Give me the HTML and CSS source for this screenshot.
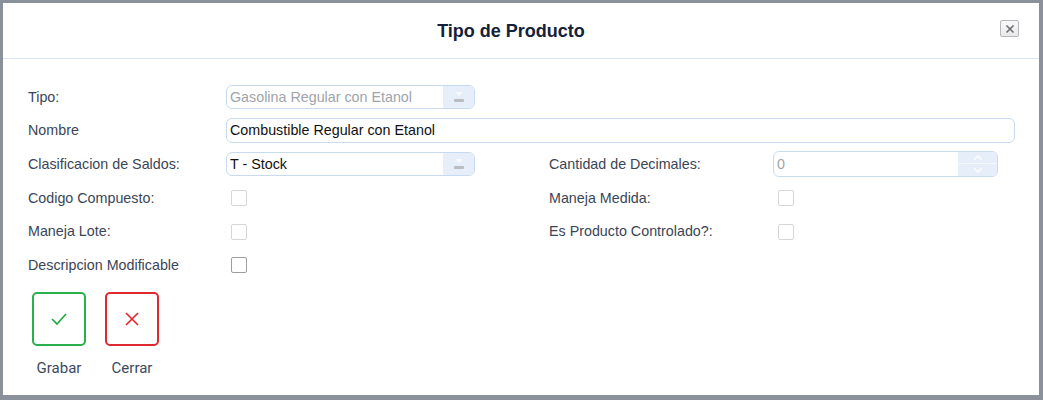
FILE: index.html
```html
<!DOCTYPE html>
<html lang="es">
<head>
<meta charset="utf-8">
<title>Tipo de Producto</title>
<link rel="stylesheet" href="styles.css">
</head>
<body>
<div class="dialog">
  <div class="header">
    <h1 class="title">Tipo de Producto</h1>
    <button class="close" type="button" aria-label="Cerrar">
      <svg width="10" height="10" viewBox="0 0 10 10"><path d="M1.5 1.5 L8.5 8.5 M8.5 1.5 L1.5 8.5" stroke="#6d6d6d" stroke-width="1.6" fill="none"/></svg>
    </button>
  </div>
  <div class="content">
    <div class="form">
      <div class="lbl">Tipo:</div>
      <div class="ctl">
        <div class="select disabled">
          <span class="val">Gasolina Regular con Etanol</span>
          <span class="arrow"><svg width="14" height="14" viewBox="0 0 14 14"><path d="M3 2 L11 2 L7 6 Z" fill="#f7f9fc"/><rect x="2" y="9" width="10" height="3" rx="1" fill="#b9bcc0"/></svg></span>
        </div>
      </div>
      <div></div><div></div>

      <div class="lbl">Nombre</div>
      <div class="ctl span3">
        <div class="input"><span class="val">Combustible Regular con Etanol</span></div>
      </div>

      <div class="lbl">Clasificacion de Saldos:</div>
      <div class="ctl">
        <div class="select">
          <span class="val">T - Stock</span>
          <span class="arrow"><svg width="14" height="14" viewBox="0 0 14 14"><path d="M3 2 L11 2 L7 6 Z" fill="#f7f9fc"/><rect x="2" y="9" width="10" height="3" rx="1" fill="#b9bcc0"/></svg></span>
        </div>
      </div>
      <div class="lbl">Cantidad de Decimales:</div>
      <div class="ctl">
        <div class="number">
          <span class="val muted">0</span>
          <span class="spin">
            <span class="spin-btn"><svg width="12" height="8" viewBox="0 0 12 8"><path d="M2 6 L6 2 L10 6" stroke="#fbfcfe" stroke-width="1.6" fill="none"/></svg></span>
            <span class="spin-btn down"><svg width="12" height="8" viewBox="0 0 12 8"><path d="M2 2 L6 6 L10 2" stroke="#fbfcfe" stroke-width="1.6" fill="none"/></svg></span>
          </span>
        </div>
      </div>

      <div class="lbl">Codigo Compuesto:</div>
      <div class="ctl"><span class="check disabled"></span></div>
      <div class="lbl">Maneja Medida:</div>
      <div class="ctl"><span class="check disabled"></span></div>

      <div class="lbl">Maneja Lote:</div>
      <div class="ctl"><span class="check disabled"></span></div>
      <div class="lbl">Es Producto Controlado?:</div>
      <div class="ctl"><span class="check disabled"></span></div>

      <div class="lbl">Descripcion Modificable</div>
      <div class="ctl"><span class="check"></span></div>
      <div></div><div></div>
    </div>

    <div class="actions">
      <div class="action">
        <button class="abtn save" type="button" aria-label="Grabar">
          <svg width="18" height="14" viewBox="0 0 18 14"><path d="M2 7 L7 12 L16 2" stroke="#22aa44" stroke-width="1.7" fill="none"/></svg>
        </button>
        <span class="alabel">Grabar</span>
      </div>
      <div class="action">
        <button class="abtn cancel" type="button" aria-label="Cerrar">
          <svg width="16" height="16" viewBox="0 0 16 16"><path d="M2 2 L14 14 M14 2 L2 14" stroke="#e02a2e" stroke-width="1.7" fill="none"/></svg>
        </button>
        <span class="alabel">Cerrar</span>
      </div>
    </div>
  </div>
</div>
</body>
</html>
```

FILE: styles.css
```css
html, body {
  margin: 0;
  padding: 0;
}
body {
  background: #8b919b;
  width: 1043px;
  height: 400px;
  overflow: hidden;
  font-family: "Liberation Sans", Arial, sans-serif;
}
.dialog {
  margin: 3px 4px 0 3px;
  height: 392px;
  background: #ffffff;
  box-sizing: border-box;
}
.header {
  height: 56px;
  border-bottom: 1px solid #d8e5f2;
  display: flex;
  align-items: center;
  justify-content: center;
  position: relative;
  box-sizing: border-box;
  padding-right: 20px;
}
.title {
  margin: 0;
  font-size: 18px;
  font-weight: bold;
  color: #14213a;
  padding-top: 1px;
}
.close {
  position: absolute;
  right: 20px;
  top: 17px;
  width: 19px;
  height: 17px;
  padding: 0;
  border: 1px solid #b5b8bc;
  border-radius: 2px;
  background: linear-gradient(#f9f9f9, #e9e9e9);
  display: flex;
  align-items: center;
  justify-content: center;
}
.content {
  padding: 21px 0 0 25px;
}
.form {
  display: grid;
  grid-template-columns: 198px 323px 224px 242px;
  grid-auto-rows: 33.6px;
  color: #3a4557;
  font-size: 14.3px;
}
.lbl {
  display: flex;
  align-items: center;
}
.ctl {
  display: flex;
  align-items: center;
}
.span3 {
  grid-column: span 3;
}
.select, .input, .number {
  box-sizing: border-box;
  height: 24px;
  border: 1px solid #c8daee;
  border-radius: 6px;
  display: flex;
  align-items: center;
  overflow: hidden;
  background: #fff;
  color: #111;
}
.select {
  width: 249px;
}
.input {
  width: 790px;
  height: 25px;
}
.number {
  width: 225px;
  height: 26px;
}
.val {
  flex: 1;
  padding-left: 3px;
  white-space: nowrap;
}
.disabled .val, .muted {
  color: #a0a4aa;
}
.arrow {
  width: 31px;
  align-self: stretch;
  background: #e6eef9;
  display: flex;
  align-items: center;
  justify-content: center;
}
.spin {
  width: 39px;
  align-self: stretch;
  background: #e6eef9;
  display: flex;
  flex-direction: column;
}
.spin-btn {
  flex: 1;
  display: flex;
  align-items: center;
  justify-content: center;
}
.spin-btn.down {
  border-top: 1px solid #f4f7fc;
}
.check {
  display: block;
  width: 16px;
  height: 16px;
  box-sizing: border-box;
  border: 1px solid #9d9d9d;
  border-radius: 2px;
  margin-left: 5px;
  margin-top: 1px;
}
.check.disabled {
  border-color: #d6d6d6;
}
.actions {
  display: flex;
  gap: 19px;
  padding: 10px 0 0 4px;
}
.action {
  display: flex;
  flex-direction: column;
  align-items: center;
  gap: 13px;
}
.abtn {
  width: 54px;
  height: 54px;
  box-sizing: border-box;
  border-radius: 5px;
  background: #fff;
  padding: 0;
  display: flex;
  align-items: center;
  justify-content: center;
}
.abtn.save {
  border: 2px solid #29b04b;
}
.abtn.cancel {
  border: 2px solid #e0292e;
}
.alabel {
  font-family: Roboto, "Liberation Sans", sans-serif;
  font-size: 15px;
  color: #3b4a5f;
}
```
